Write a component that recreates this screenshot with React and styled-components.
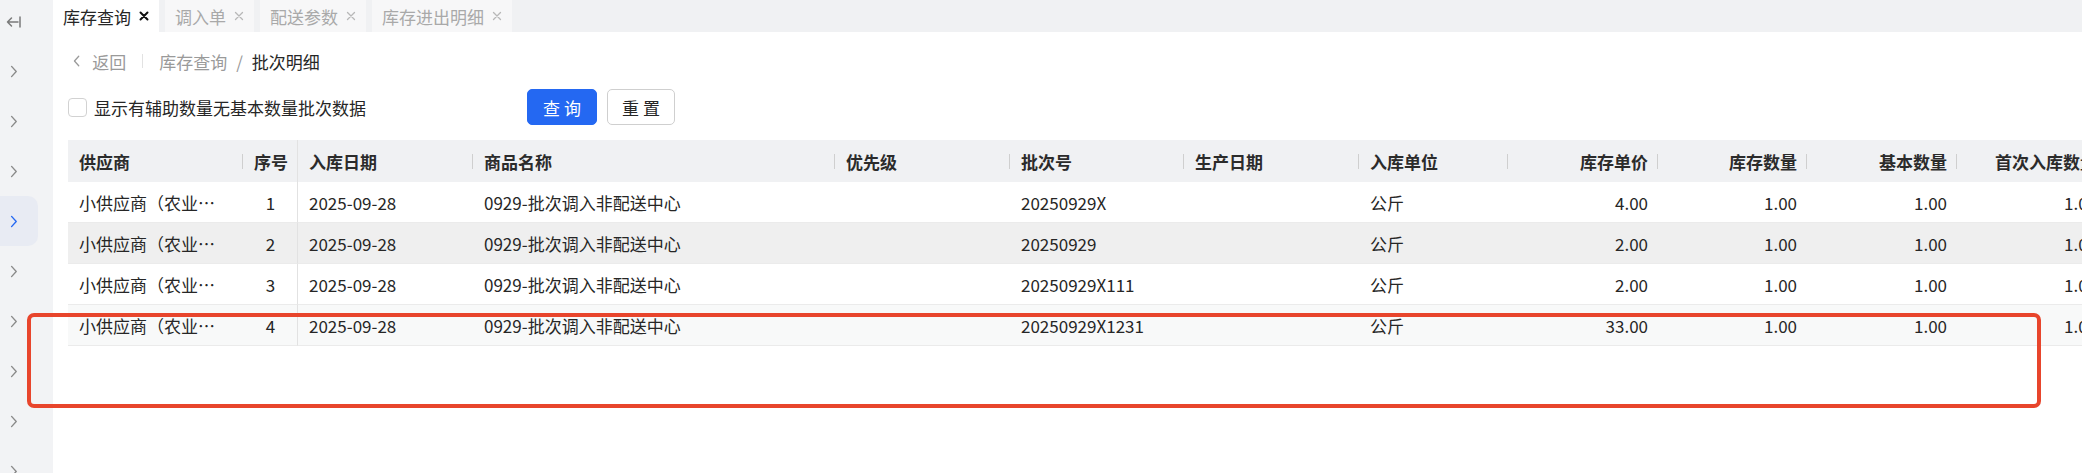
import React from 'react';
import styled, { createGlobalStyle } from 'styled-components';

const GlobalStyle = createGlobalStyle`
  html, body { margin: 0; padding: 0; background: #fff; }
  body {
    font-family: "Noto Sans CJK SC", "Noto Sans", sans-serif;
    font-size: 17px;
    color: #262626;
    overflow: hidden;
  }
  * { box-sizing: border-box; }
`;

const Shell = styled.div`
  position: relative;
  display: flex;
  width: 2082px;
  height: 473px;
  overflow: hidden;
`;

const Sidebar = styled.nav`
  width: 53px;
  flex: none;
  background: #f2f3f5;
  display: flex;
  flex-direction: column;
  overflow: hidden;
`;

const SideTop = styled.div`
  height: 46px;
  flex: none;
  display: flex;
  align-items: center;
  padding-left: 5px;
  padding-bottom: 2px;
  color: #7a7a7a;
`;

const SideItem = styled.div`
  height: 50px;
  width: 38px;
  flex: none;
  display: flex;
  align-items: center;
  padding-left: 10px;
  color: ${(p) => (p.$active ? '#2468f2' : '#8a8a8a')};
  background: ${(p) => (p.$active ? '#e8ebf3' : 'transparent')};
  border-radius: 0 10px 10px 0;
`;

const Main = styled.main`
  flex: 1;
  min-width: 0;
  display: flex;
  flex-direction: column;
  background: #fff;
`;

const TabBar = styled.div`
  height: 32px;
  flex: none;
  background: #f0f1f3;
  display: flex;
`;

const Tab = styled.div`
  height: 32px;
  display: flex;
  align-items: center;
  gap: 8px;
  padding: 0 10px;
  margin-right: 6px;
  white-space: nowrap;
  background: ${(p) => (p.$active ? '#ffffff' : '#f7f7f8')};
  color: ${(p) => (p.$active ? '#262626' : '#a9a9a9')};
`;

const TabClose = styled.span`
  display: flex;
  align-items: center;
  color: ${(p) => (p.$active ? '#111' : '#b8b8b8')};
`;

const Content = styled.div`
  flex: 1;
  min-height: 0;
  padding-left: 15px;
  display: flex;
  flex-direction: column;
`;

const Breadcrumb = styled.div`
  margin-top: 14px;
  height: 30px;
  display: flex;
  align-items: center;
  padding-left: 5px;
  white-space: nowrap;
`;

const BackLink = styled.span`
  display: flex;
  align-items: center;
  gap: 12px;
  color: #9a9a9a;
`;

const CrumbDivider = styled.span`
  width: 1px;
  height: 14px;
  background: #e2e2e2;
  margin: 0 16px;
`;

const Crumb = styled.span`
  color: ${(p) => (p.$current ? '#262626' : '#9a9a9a')};
`;

const CrumbSlash = styled.span`
  color: #9a9a9a;
  margin: 0 9px;
`;

const FilterRow = styled.div`
  margin-top: 13px;
  height: 36px;
  display: flex;
  align-items: center;
`;

const CheckField = styled.label`
  width: 459px;
  display: flex;
  align-items: center;
  gap: 7px;
  white-space: nowrap;
  color: #262626;
`;

const CheckBox = styled.span`
  width: 19px;
  height: 19px;
  border: 1px solid #d2d2d2;
  border-radius: 4px;
  background: #fff;
  flex: none;
`;

const Button = styled.button`
  height: 36px;
  width: ${(p) => p.$w}px;
  margin-right: 10px;
  border-radius: 5px;
  font-family: inherit;
  font-size: 17px;
  padding: 0;
  cursor: pointer;
  border: 1px solid ${(p) => (p.$primary ? '#2468f2' : '#cfcfcf')};
  background: ${(p) => (p.$primary ? '#2468f2' : '#ffffff')};
  color: ${(p) => (p.$primary ? '#ffffff' : '#262626')};
`;

const TableWrap = styled.div`
  margin-top: 15px;
  overflow: hidden;
`;

const Table = styled.table`
  table-layout: fixed;
  border-collapse: separate;
  border-spacing: 0;
  width: 2039px;
`;

const Th = styled.th`
  position: relative;
  height: 42px;
  padding: 0 10px 0 11px;
  background: #f0f1f3;
  font-weight: 600;
  color: #2b2b2b;
  white-space: nowrap;
  overflow: hidden;
  text-align: ${(p) => p.$align || 'left'};
  border-right: ${(p) => (p.$fixed ? '1px solid #e2e2e2' : 'none')};
  &::after {
    content: '';
    display: ${(p) => (p.$fixed || p.$last ? 'none' : 'block')};
    position: absolute;
    right: 0;
    top: 14px;
    width: 1px;
    height: 15px;
    background: #cfcfcf;
  }
`;

const Tr = styled.tr`
  background: ${(p) => p.$bg || '#ffffff'};
`;

const Td = styled.td`
  height: 41px;
  padding: 0 ${(p) => p.$padRight || 10}px 0 11px;
  border-bottom: 1px solid #ebebeb;
  white-space: nowrap;
  overflow: hidden;
  text-overflow: ellipsis;
  color: #262626;
  text-align: ${(p) => p.$align || 'left'};
  border-right: ${(p) => (p.$fixed ? '1px solid #e2e2e2' : 'none')};
`;

const Annotation = styled.div`
  position: absolute;
  left: 27px;
  top: 313px;
  width: 2014px;
  height: 95px;
  border: 4px solid #e8452c;
  border-radius: 7px;
  pointer-events: none;
`;

const Chevron = ({ dir = 'right', size = 13 }) => (
  <svg width={size * 0.6} height={size} viewBox="0 0 8 14" fill="none">
    <path
      d={dir === 'right' ? 'M1.5 1.5 L6.5 7 L1.5 12.5' : 'M6.5 1.5 L1.5 7 L6.5 12.5'}
      stroke="currentColor"
      strokeWidth="1.5"
      strokeLinecap="round"
      strokeLinejoin="round"
    />
  </svg>
);

const CollapseIcon = () => (
  <svg width="17" height="14" viewBox="0 0 17 14" fill="none">
    <path d="M15 2 V12" stroke="currentColor" strokeWidth="1.5" strokeLinecap="round" />
    <path d="M13 7 H2.5 M6.5 3 L2.5 7 L6.5 11" stroke="currentColor" strokeWidth="1.5" strokeLinecap="round" strokeLinejoin="round" />
  </svg>
);

const CloseIcon = ({ bold }) => (
  <svg width="10" height="10" viewBox="0 0 10 10" fill="none">
    <path d="M1.5 1.5 L8.5 8.5 M8.5 1.5 L1.5 8.5" stroke="currentColor" strokeWidth={bold ? 2 : 1.3} strokeLinecap="round" />
  </svg>
);

const columns = [
  { key: 'supplier', title: '供应商', width: 175, padRight: 24 },
  { key: 'no', title: '序号', width: 55, align: 'center', fixed: true },
  { key: 'date', title: '入库日期', width: 175 },
  { key: 'name', title: '商品名称', width: 362 },
  { key: 'priority', title: '优先级', width: 175 },
  { key: 'batch', title: '批次号', width: 174 },
  { key: 'prod', title: '生产日期', width: 175 },
  { key: 'unit', title: '入库单位', width: 149 },
  { key: 'price', title: '库存单价', width: 150, align: 'right' },
  { key: 'qty', title: '库存数量', width: 149, align: 'right' },
  { key: 'base', title: '基本数量', width: 150, align: 'right' },
  { key: 'first', title: '首次入库数量', width: 150, align: 'right', last: true },
];

const rows = [
  { batch: '20250929X', price: '4.00', bg: '#ffffff' },
  { batch: '20250929', price: '2.00', bg: '#efefef' },
  { batch: '20250929X111', price: '2.00', bg: '#ffffff' },
  { batch: '20250929X1231', price: '33.00', bg: '#f8f9f9' },
].map((r, i) => ({
  supplier: '小供应商（农业合作社）',
  no: String(i + 1),
  date: '2025-09-28',
  name: '0929-批次调入非配送中心',
  priority: '',
  prod: '',
  unit: '公斤',
  qty: '1.00',
  base: '1.00',
  first: '1.00',
  ...r,
}));

const tabs = [
  { label: '库存查询', active: true },
  { label: '调入单' },
  { label: '配送参数' },
  { label: '库存进出明细' },
];

export default function App() {
  return (
    <>
      <GlobalStyle />
      <Shell>
        <Sidebar>
          <SideTop>
            <CollapseIcon />
          </SideTop>
          {[0, 1, 2, 3, 4, 5, 6, 7, 8].map((i) => (
            <SideItem key={i} $active={i === 3}>
              <Chevron />
            </SideItem>
          ))}
        </Sidebar>
        <Main>
          <TabBar>
            {tabs.map((t) => (
              <Tab key={t.label} $active={t.active}>
                {t.label}
                <TabClose $active={t.active}>
                  <CloseIcon bold={t.active} />
                </TabClose>
              </Tab>
            ))}
          </TabBar>
          <Content>
            <Breadcrumb>
              <BackLink>
                <Chevron dir="left" size={12} />
                返回
              </BackLink>
              <CrumbDivider />
              <Crumb>库存查询</Crumb>
              <CrumbSlash>/</CrumbSlash>
              <Crumb $current>批次明细</Crumb>
            </Breadcrumb>
            <FilterRow>
              <CheckField>
                <CheckBox />
                显示有辅助数量无基本数量批次数据
              </CheckField>
              <Button $primary $w={70}>查 询</Button>
              <Button $w={68}>重 置</Button>
            </FilterRow>
            <TableWrap>
              <Table>
                <colgroup>
                  {columns.map((c) => (
                    <col key={c.key} style={{ width: c.width }} />
                  ))}
                </colgroup>
                <thead>
                  <tr>
                    {columns.map((c) => (
                      <Th key={c.key} $align={c.align} $fixed={c.fixed} $last={c.last}>
                        {c.title}
                      </Th>
                    ))}
                  </tr>
                </thead>
                <tbody>
                  {rows.map((r) => (
                    <Tr key={r.no} $bg={r.bg}>
                      {columns.map((c) => (
                        <Td key={c.key} $align={c.align} $fixed={c.fixed} $padRight={c.padRight}>
                          {r[c.key]}
                        </Td>
                      ))}
                    </Tr>
                  ))}
                </tbody>
              </Table>
            </TableWrap>
          </Content>
        </Main>
        <Annotation />
      </Shell>
    </>
  );
}
